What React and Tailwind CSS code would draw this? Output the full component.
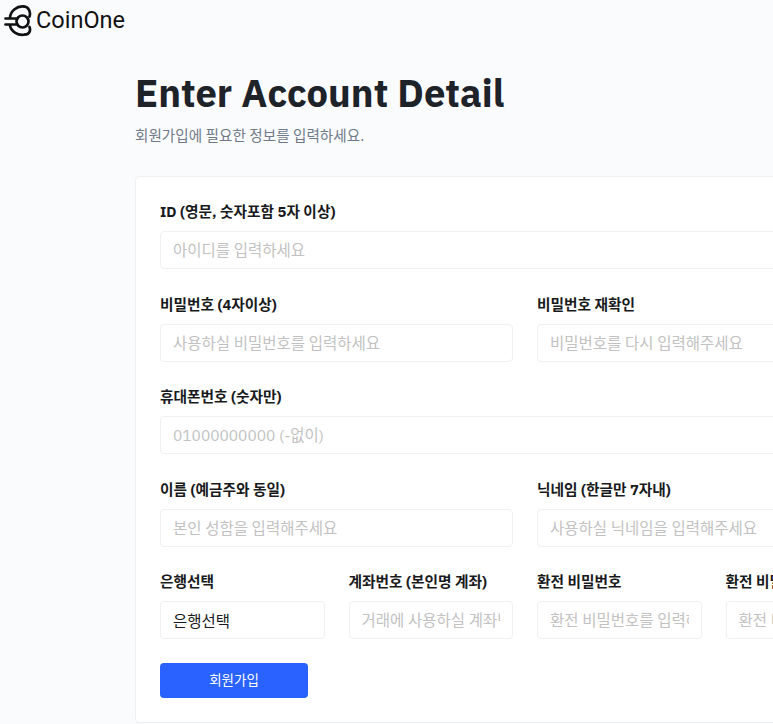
const kr = "font-['IBM_Plex_Sans','Noto_Sans','Noto_Sans_CJK_KR',sans-serif]"

function Logo() {
  return (
    <svg width="28" height="32" viewBox="4 4 28 32" fill="none" stroke="#111" strokeWidth="2.700" strokeLinecap="round">
      <path d="M24 5.500C17 4.500 10.500 10 10 16.500" />
      <path d="M24 5.500C28.500 5.500 31 11 29.500 15.500" />
      <circle cx="22.500" cy="20.500" r="6" />
      <path d="M10 24.500C11 30.500 18 35 25 33.500" />
      <path d="M25 33.500C29 33.500 31 30 29.500 26" />
      <path d="M5.500 17.500H17.500M5.500 23.500H17.500" />
    </svg>
  )
}

function Field({ label, placeholder, value }) {
  return (
    <div className="flex flex-col gap-[9px] min-w-0">
      <label className="text-[14.700px] leading-[20px] font-bold text-[#181a20] whitespace-nowrap">{label}</label>
      <input
        readOnly
        value={value}
        placeholder={placeholder}
        className="w-full h-[38px] px-3 bg-white border border-[#eff0f3] rounded text-[15.500px] text-[#181a20] placeholder:text-[#c2c2c2] outline-none"
      />
    </div>
  )
}

export default function App() {
  return (
    <div className={`w-[773px] h-[724px] overflow-hidden bg-[#fafbfd] ${kr}`}>
      {/* Header */}
      <div className="h-[42px] flex items-center gap-[4px] pl-[4px]">
        <Logo />
        <span className="text-[23.500px] font-[450] text-[#111] font-['Roboto',sans-serif]">CoinOne</span>
      </div>

      <div className="w-[780px] ml-[135px]">
        <h1 className="mt-[26px] text-[38.200px] leading-[50px] font-bold text-[#1e2329]">Enter Account Detail</h1>
        <p className="mt-[8px] text-[14.600px] leading-[20px] text-[#707a8a]">회원가입에 필요한 정보를 입력하세요.</p>

        {/* Form card */}
        <div className="mt-[30px] bg-white border border-[#eff0f3] rounded px-6 pt-[25px] pb-6 flex flex-col gap-[25.500px]">
          <Field label="ID (영문, 숫자포함 5자 이상)" placeholder="아이디를 입력하세요" />
          <div className="grid grid-cols-2 gap-6">
            <Field label="비밀번호 (4자이상)" placeholder="사용하실 비밀번호를 입력하세요" />
            <Field label="비밀번호 재확인" placeholder="비밀번호를 다시 입력해주세요" />
          </div>
          <Field label="휴대폰번호 (숫자만)" placeholder="01000000000 (-없이)" />
          <div className="grid grid-cols-2 gap-6">
            <Field label="이름 (예금주와 동일)" placeholder="본인 성함을 입력해주세요" />
            <Field label="닉네임 (한글만 7자내)" placeholder="사용하실 닉네임을 입력해주세요" />
          </div>
          <div className="grid grid-cols-4 gap-6">
            <Field label="은행선택" value="은행선택" />
            <Field label="계좌번호 (본인명 계좌)" placeholder="거래에 사용하실 계좌번호를 입력하세요" />
            <Field label="환전 비밀번호" placeholder="환전 비밀번호를 입력해주세요" />
            <Field label="환전 비밀번호 재확인" placeholder="환전 비밀번호를 다시 입력해주세요" />
          </div>
          <button className="-mt-[1.500px] w-[148px] h-[35px] bg-[#2962ff] rounded text-[13.500px] text-white">회원가입</button>
        </div>
      </div>
    </div>
  )
}
